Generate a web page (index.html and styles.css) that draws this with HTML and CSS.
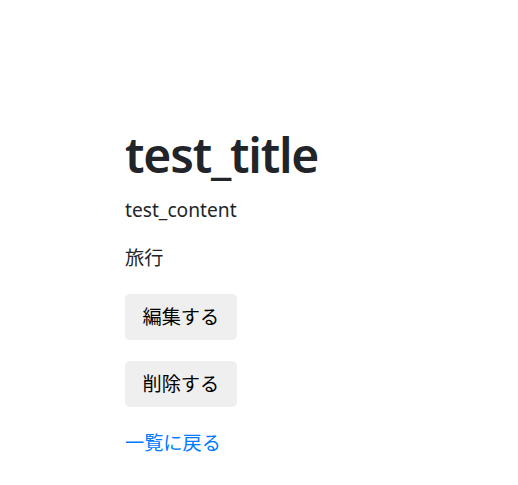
FILE: index.html
```html
<!DOCTYPE html>
<html lang="ja">
<head>
    <meta charset="UTF-8">
    <meta name="viewport" content="width=device-width, initial-scale=1.0">
    <title>test_title</title>
    <link rel="stylesheet" href="styles.css">
</head>
<body>
    <div class="container">
        <h1 class="post-title">test_title</h1>
        <p class="post-content">test_content</p>
        <p class="post-category">旅行</p>

        <div class="actions">
            <button class="btn">編集する</button>
            <button class="btn">削除する</button>
        </div>

        <a class="back-link" href="#">一覧に戻る</a>
    </div>
</body>
</html>
```

FILE: styles.css
```css
body {
    font-family: "Noto Sans", "Noto Sans CJK JP", sans-serif;
    font-size: 19.2px;
    line-height: 1.5;
    color: #212529;
    background: white;
    margin: 0;
}
.container {
    padding: 126px 0 0 125px;
}
.post-title {
    font-size: 48px;
    font-weight: 600;
    letter-spacing: -1.2px;
    line-height: 1.2;
    margin: 0 0 12px;
}
.post-content {
    margin: 0 0 20px;
}
.post-category {
    margin: 0 0 21px;
}
.actions {
    display: flex;
    flex-direction: column;
    align-items: flex-start;
    gap: 21px;
    margin-bottom: 22px;
}
.btn {
    font-family: inherit;
    font-size: 19.2px;
    line-height: 1.5;
    color: #000;
    background: #efefef;
    border: none;
    border-radius: 5px;
    padding: 8.6px 17.5px;
}
.back-link {
    color: #007bff;
    text-decoration: none;
}
```
